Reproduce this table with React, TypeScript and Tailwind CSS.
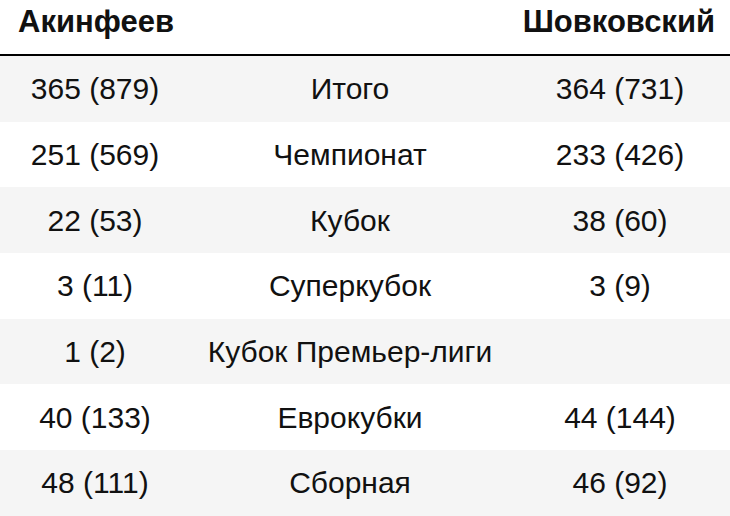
const rows: [string, string, string][] = [
  ["365 (879)", "Итого", "364 (731)"],
  ["251 (569)", "Чемпионат", "233 (426)"],
  ["22 (53)", "Кубок", "38 (60)"],
  ["3 (11)", "Суперкубок", "3 (9)"],
  ["1 (2)", "Кубок Премьер-лиги", ""],
  ["40 (133)", "Еврокубки", "44 (144)"],
  ["48 (111)", "Сборная", "46 (92)"],
];

export default function App() {
  return (
    <div className="h-[516px] w-[730px] overflow-hidden bg-white font-['Liberation_Sans',Arial,sans-serif] text-[#111]">
      <div className="flex h-[56px] items-center justify-between border-b-2 border-black pb-[9px] pl-[18px] pr-[15px] text-[31px] font-bold">
        <span>Акинфеев</span>
        <span>Шовковский</span>
      </div>
      {rows.map(([left, title, right], i) => (
        <div
          key={title}
          className={`grid h-[65.7px] grid-cols-[190px_320px_220px] items-center text-center text-[30px] ${
            i % 2 === 0 ? "bg-[#f5f5f5]" : "bg-white"
          }`}
        >
          <span>{left}</span>
          <span>{title}</span>
          <span>{right}</span>
        </div>
      ))}
    </div>
  );
}
